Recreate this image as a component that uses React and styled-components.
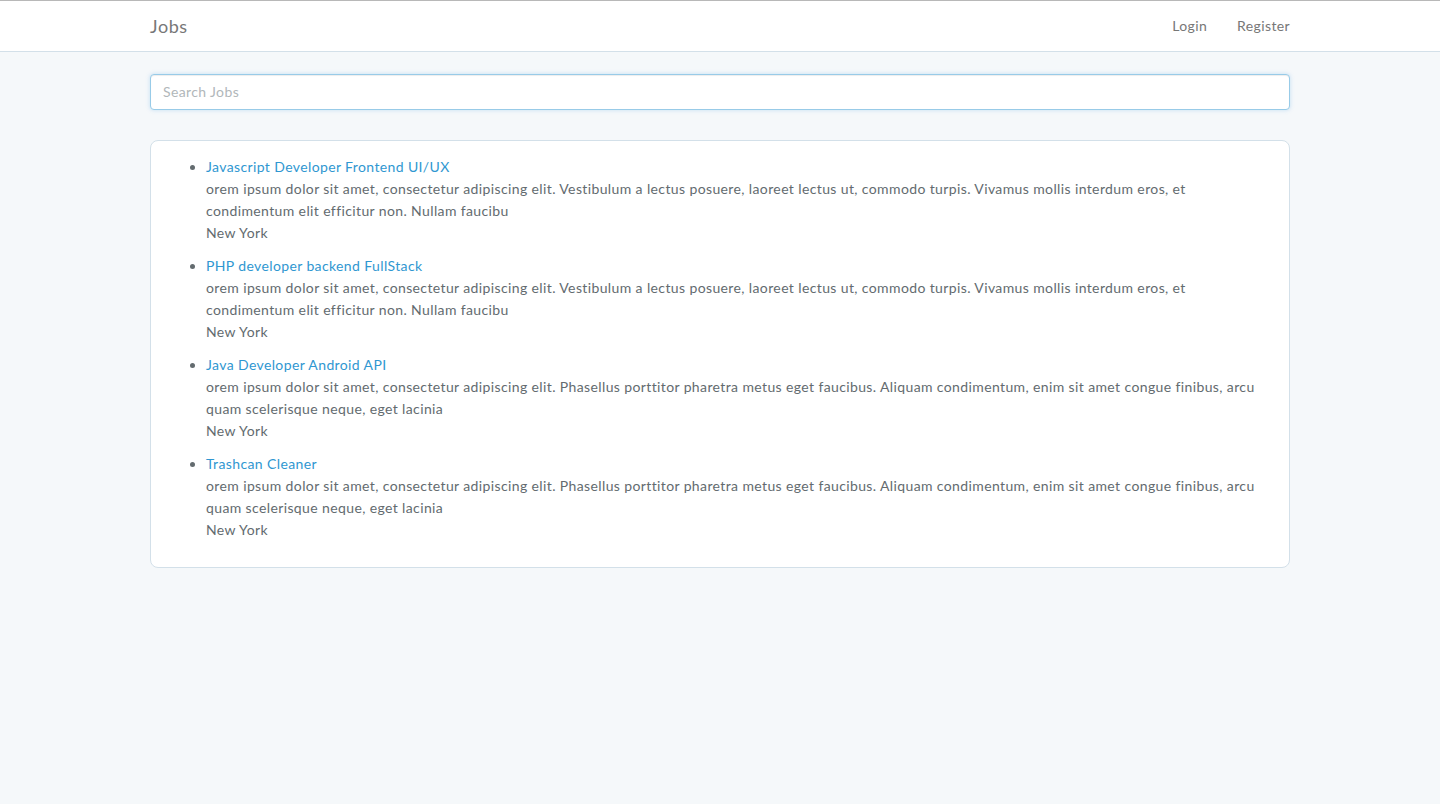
import React, { useState } from "react";
import styled, { createGlobalStyle } from "styled-components";

const GlobalStyle = createGlobalStyle`
  html, body {
    margin: 0;
    padding: 0;
  }
  body {
    background-color: #f5f8fa;
    font-family: "Lato", "Open Sans", sans-serif;
    font-size: 14px;
    line-height: 22px;
    letter-spacing: 0.38px;
    color: #636b6f;
    min-height: 100vh;
    border-top: 1px solid #b8b8b8;
  }
`;

const Navbar = styled.nav`
  background-color: #fff;
  border-bottom: 1px solid #d3e0e9;
  height: 50px;
  margin-bottom: 22px;
`;

const Container = styled.div`
  width: 1140px;
  margin: 0 auto;
`;

const NavInner = styled(Container)`
  display: flex;
  align-items: center;
  justify-content: space-between;
  height: 100%;
`;

const Brand = styled.a`
  font-size: 18px;
  letter-spacing: 0.6px;
  color: #777;
  text-decoration: none;
`;

const NavLinks = styled.div`
  display: flex;
  gap: 30px;
`;

const NavLink = styled.a`
  font-size: 14px;
  color: #777;
  text-decoration: none;
`;

const Search = styled.input`
  display: block;
  box-sizing: border-box;
  width: 100%;
  height: 36px;
  padding: 5px 12px 7px;
  font-family: inherit;
  font-size: 14px;
  letter-spacing: inherit;
  color: #555;
  background: #fff;
  border: 1px solid #98cbe8;
  border-radius: 4px;
  box-shadow: inset 0 1px 1px rgba(0, 0, 0, 0.075), 0 0 4px rgba(102, 175, 233, 0.35);
  outline: none;
  margin-bottom: 30px;
  &::placeholder {
    color: #b1b7ba;
  }
`;

const Panel = styled.div`
  background: #fff;
  border: 1px solid #d3e0e9;
  border-radius: 8px;
  padding: 15px;
`;

const JobList = styled.ul`
  margin: 0;
  padding-left: 40px;
`;

const JobItem = styled.li`
  margin-bottom: 11px;
`;

const JobTitle = styled.a`
  color: #3097d1;
  text-decoration: none;
`;

const jobs = [
  {
    title: "Javascript Developer Frontend UI/UX",
    text: "orem ipsum dolor sit amet, consectetur adipiscing elit. Vestibulum a lectus posuere, laoreet lectus ut, commodo turpis. Vivamus mollis interdum eros, et condimentum elit efficitur non. Nullam faucibu",
    city: "New York",
  },
  {
    title: "PHP developer backend FullStack",
    text: "orem ipsum dolor sit amet, consectetur adipiscing elit. Vestibulum a lectus posuere, laoreet lectus ut, commodo turpis. Vivamus mollis interdum eros, et condimentum elit efficitur non. Nullam faucibu",
    city: "New York",
  },
  {
    title: "Java Developer Android API",
    text: "orem ipsum dolor sit amet, consectetur adipiscing elit. Phasellus porttitor pharetra metus eget faucibus. Aliquam condimentum, enim sit amet congue finibus, arcu quam scelerisque neque, eget lacinia",
    city: "New York",
  },
  {
    title: "Trashcan Cleaner",
    text: "orem ipsum dolor sit amet, consectetur adipiscing elit. Phasellus porttitor pharetra metus eget faucibus. Aliquam condimentum, enim sit amet congue finibus, arcu quam scelerisque neque, eget lacinia",
    city: "New York",
  },
];

const App = () => {
  const [query, setQuery] = useState("");

  return (
    <>
      <GlobalStyle />
      <Navbar>
        <NavInner>
          <Brand href="#">Jobs</Brand>
          <NavLinks>
            <NavLink href="#">Login</NavLink>
            <NavLink href="#">Register</NavLink>
          </NavLinks>
        </NavInner>
      </Navbar>
      <Container>
        <Search
          placeholder="Search Jobs"
          value={query}
          onChange={(e) => setQuery(e.target.value)}
        />
        <Panel>
          <JobList>
            {jobs.map((job) => (
              <JobItem key={job.title}>
                <JobTitle href="#">{job.title}</JobTitle>
                <br />
                {job.text}
                <br />
                {job.city}
              </JobItem>
            ))}
          </JobList>
        </Panel>
      </Container>
    </>
  );
};

export default App;
